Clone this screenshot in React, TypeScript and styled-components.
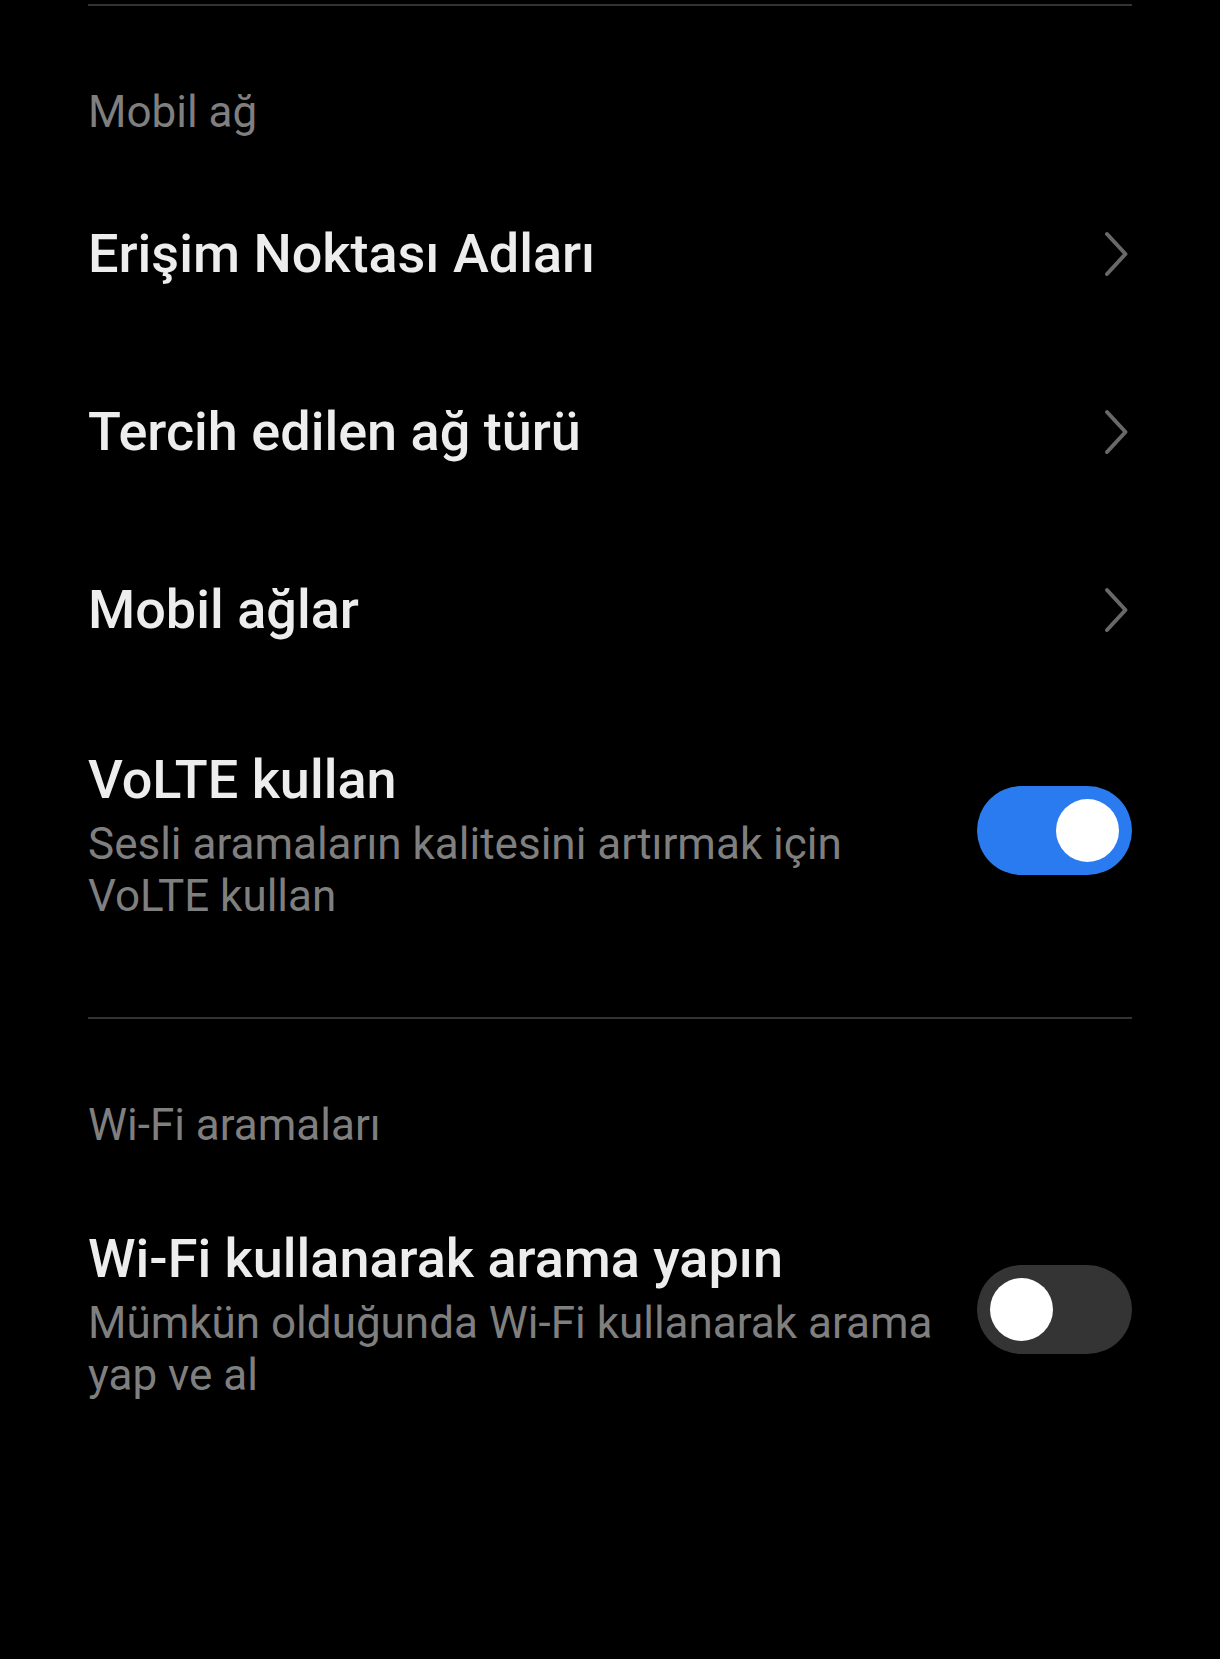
import React from "react";
import styled, { createGlobalStyle } from "styled-components";

const GlobalStyle = createGlobalStyle`
    html, body {
        margin: 0;
        padding: 0;
        background: #000;
    }
    body {
        font-family: Roboto, "Noto Sans", "Liberation Sans", sans-serif;
        -webkit-font-smoothing: antialiased;
    }
`;

const Page = styled.div`
    min-height: 1659px;
    background: #000;
    padding: 4px 88px 0;
    box-sizing: border-box;
`;

const Divider = styled.div<{ $gap?: number }>`
    height: 2px;
    background: #333333;
    margin-top: ${(p) => p.$gap ?? 0}px;
`;

const SectionHeader = styled.div`
    color: #7f7f7f;
    font-size: 44px;
    line-height: 60px;
    padding: 76px 0 23px;
`;

const NavRow = styled.div`
    height: 178px;
    display: flex;
    flex-direction: row;
    align-items: center;
    justify-content: space-between;
`;

const Title = styled.div`
    color: #ededed;
    font-size: 54px;
    font-weight: 500;
    line-height: 64px;
`;

const Chevron = styled.svg`
    width: 26px;
    height: 46px;
    margin-right: 2px;
    flex-shrink: 0;
`;

const SwitchRow = styled.div`
    display: flex;
    flex-direction: row;
    align-items: flex-start;
    justify-content: space-between;
    padding: 49px 0;
`;

const TextBlock = styled.div`
    max-width: 850px;
    display: flex;
    flex-direction: column;
`;

const Summary = styled.div`
    color: #7f7f7f;
    font-size: 44px;
    line-height: 52px;
    margin-top: 6px;
    margin-bottom: 1px;
`;

const Track = styled.div<{ $on: boolean }>`
    width: 155px;
    height: 89px;
    border-radius: 45px;
    background: ${(p) => (p.$on ? "#2b7bf0" : "#343434")};
    display: flex;
    align-items: center;
    justify-content: ${(p) => (p.$on ? "flex-end" : "flex-start")};
    padding: 0 13px;
    box-sizing: border-box;
    flex-shrink: 0;
    margin-top: 38px;
`;

const Knob = styled.div`
    width: 63px;
    height: 63px;
    border-radius: 50%;
    background: #ffffff;
`;

const ChevronIcon = () => (
    <Chevron viewBox="0 0 26 46">
        <path
            d="M3 3 L21.5 23 L3 43"
            fill="none"
            stroke="#686868"
            strokeWidth={4}
            strokeLinecap="round"
            strokeLinejoin="round"
        />
    </Chevron>
);

const Switch = ({ on }: { on: boolean }) => (
    <Track $on={on}>
        <Knob />
    </Track>
);

const navItems = ["Erişim Noktası Adları", "Tercih edilen ağ türü", "Mobil ağlar"];

export default function App() {
    return (
        <>
            <GlobalStyle />
            <Page>
                <Divider />
                <SectionHeader>Mobil ağ</SectionHeader>
                {navItems.map((label) => (
                    <NavRow key={label}>
                        <Title>{label}</Title>
                        <ChevronIcon />
                    </NavRow>
                ))}
                <SwitchRow>
                    <TextBlock>
                        <Title>VoLTE kullan</Title>
                        <Summary>Sesli aramaların kalitesini artırmak için VoLTE kullan</Summary>
                    </TextBlock>
                    <Switch on={true} />
                </SwitchRow>

                <Divider $gap={45} />
                <SectionHeader>Wi-Fi aramaları</SectionHeader>
                <SwitchRow>
                    <TextBlock>
                        <Title>Wi-Fi kullanarak arama yapın</Title>
                        <Summary>Mümkün olduğunda Wi-Fi kullanarak arama yap ve al</Summary>
                    </TextBlock>
                    <Switch on={false} />
                </SwitchRow>
            </Page>
        </>
    );
}
